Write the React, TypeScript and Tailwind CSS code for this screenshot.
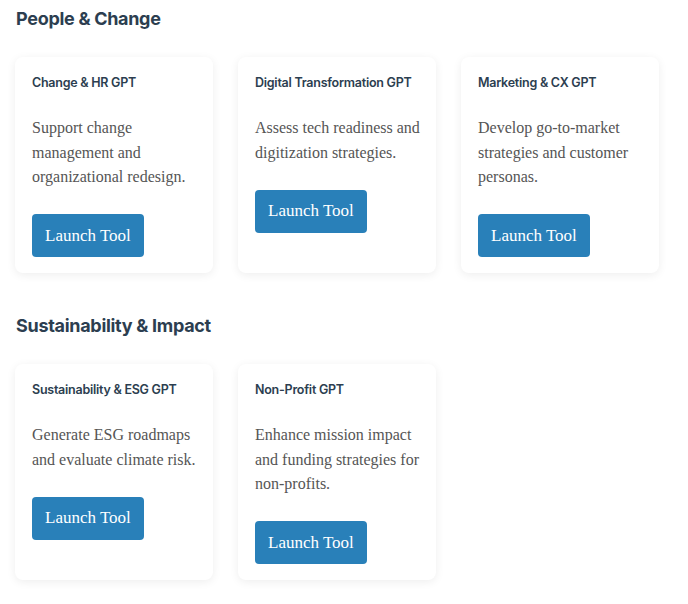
import React from 'react';

interface Tool {
  title: string;
  description: string;
}

const sections: { heading: string; tools: Tool[] }[] = [
  {
    heading: 'People & Change',
    tools: [
      { title: 'Change & HR GPT', description: 'Support change management and organizational redesign.' },
      { title: 'Digital Transformation GPT', description: 'Assess tech readiness and digitization strategies.' },
      { title: 'Marketing & CX GPT', description: 'Develop go-to-market strategies and customer personas.' },
    ],
  },
  {
    heading: 'Sustainability & Impact',
    tools: [
      { title: 'Sustainability & ESG GPT', description: 'Generate ESG roadmaps and evaluate climate risk.' },
      { title: 'Non-Profit GPT', description: 'Enhance mission impact and funding strategies for non-profits.' },
    ],
  },
];

function ToolCard({ title, description }: Tool) {
  return (
    <div className="bg-white rounded-lg pl-[17px] pr-[13px] py-4 shadow-[0_2px_10px_rgba(0,0,0,0.07)]">
      <h3 className="font-['Inter',sans-serif] text-[12.5px] leading-[19px] font-semibold text-[#2c3e50] tracking-[-0.25px] whitespace-nowrap">
        {title}
      </h3>
      <p className="mt-6 font-['Liberation_Serif',serif] text-[16px] leading-[24.5px] text-[#555555]">
        {description}
      </p>
      <button className="mt-[24.5px] h-[43px] px-[13px] rounded bg-[#2980b9] text-white font-['Liberation_Serif',serif] text-[17px]">
        Launch Tool
      </button>
    </div>
  );
}

export default function App() {
  return (
    <div className="bg-white min-h-screen px-[15px] pt-[7px]">
      {sections.map((section, i) => (
        <section key={section.heading} className={i > 0 ? 'mt-[41px]' : ''}>
          <h2 className="pl-px font-['Inter',sans-serif] text-[18px] leading-[24px] font-bold text-[#2c3e50] tracking-[-0.3px]">
            {section.heading}
          </h2>
          <div className="mt-[26px] grid grid-cols-3 gap-[25px] w-[644px]">
            {section.tools.map((tool) => (
              <ToolCard key={tool.title} {...tool} />
            ))}
          </div>
        </section>
      ))}
    </div>
  );
}
